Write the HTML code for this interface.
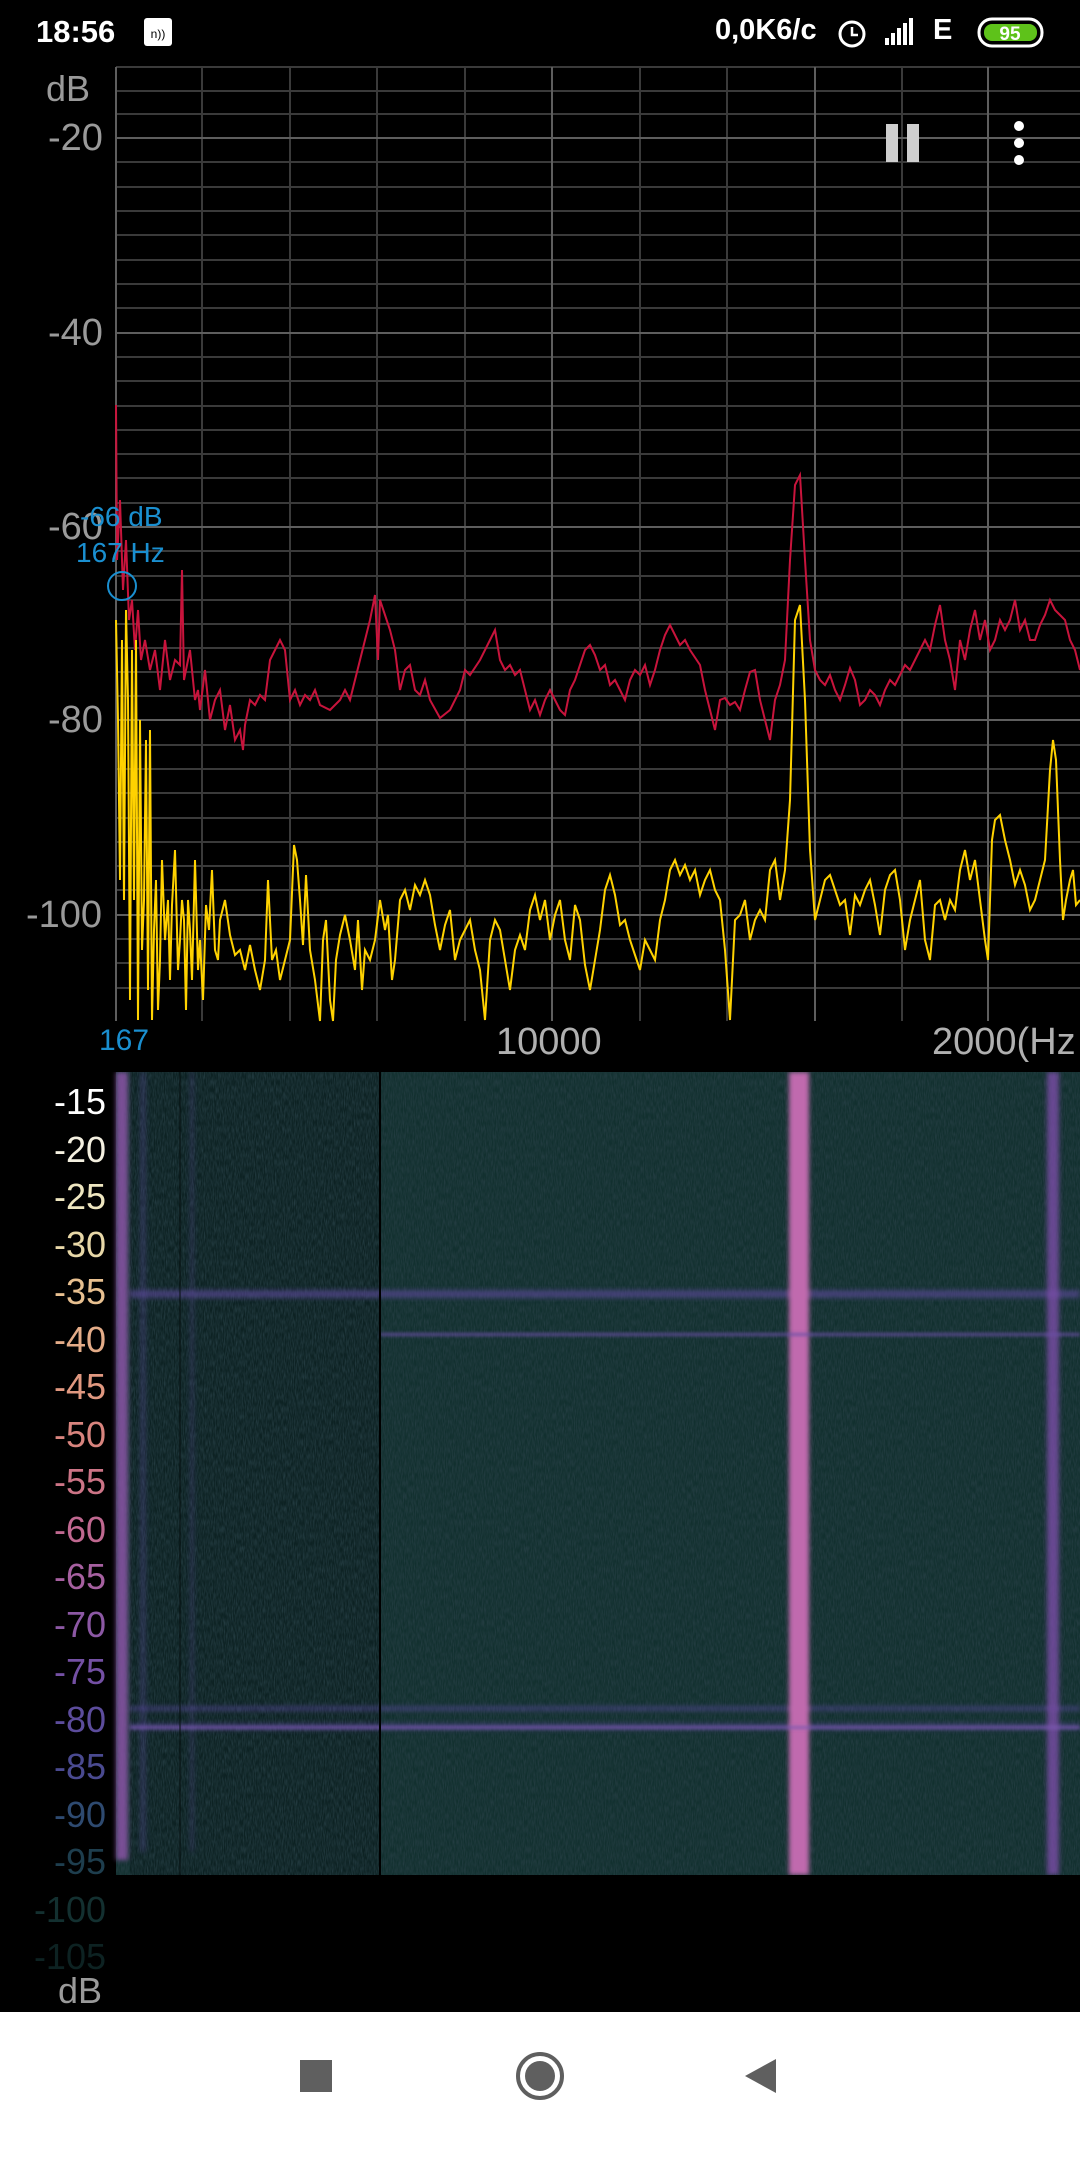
<!DOCTYPE html>
<html><head><meta charset="utf-8"><style>
html,body{margin:0;padding:0;background:#000;width:1080px;height:2160px;overflow:hidden;font-family:"Liberation Sans","DejaVu Sans",sans-serif}
.t{position:absolute;white-space:nowrap}
</style></head><body>
<svg width="1080" height="2160" style="position:absolute;left:0;top:0" xmlns="http://www.w3.org/2000/svg">
<defs>
<filter id="bl" x="-0.5" y="-0.5" width="2" height="2"><feGaussianBlur stdDeviation="2.5"/></filter>
<filter id="bl2" x="-0.5" y="-0.5" width="2" height="2"><feGaussianBlur stdDeviation="1.5"/></filter>
<filter id="noise" x="0" y="0" width="1" height="1">
<feTurbulence type="fractalNoise" baseFrequency="0.9 0.15" numOctaves="2" seed="3"/>
<feColorMatrix type="matrix" values="0 0 0 0 0.02  0 0 0 0 0.05  0 0 0 0 0.06  0 0 0 -1.6 1.1"/>
</filter>
</defs>
<rect width="1080" height="2160" fill="#000"/>
<g stroke="#3a3a3a" stroke-width="2">
<line x1="116" y1="67" x2="1080" y2="67"/><line x1="116" y1="91" x2="1080" y2="91"/><line x1="116" y1="114" x2="1080" y2="114"/>
<line x1="116" y1="162" x2="1080" y2="162"/><line x1="116" y1="187" x2="1080" y2="187"/><line x1="116" y1="211" x2="1080" y2="211"/><line x1="116" y1="235" x2="1080" y2="235"/><line x1="116" y1="260" x2="1080" y2="260"/><line x1="116" y1="284" x2="1080" y2="284"/><line x1="116" y1="308" x2="1080" y2="308"/>
<line x1="116" y1="357" x2="1080" y2="357"/><line x1="116" y1="381" x2="1080" y2="381"/><line x1="116" y1="406" x2="1080" y2="406"/><line x1="116" y1="430" x2="1080" y2="430"/><line x1="116" y1="454" x2="1080" y2="454"/><line x1="116" y1="478" x2="1080" y2="478"/><line x1="116" y1="503" x2="1080" y2="503"/>
<line x1="116" y1="551" x2="1080" y2="551"/><line x1="116" y1="576" x2="1080" y2="576"/><line x1="116" y1="600" x2="1080" y2="600"/><line x1="116" y1="624" x2="1080" y2="624"/><line x1="116" y1="648" x2="1080" y2="648"/><line x1="116" y1="672" x2="1080" y2="672"/><line x1="116" y1="696" x2="1080" y2="696"/>
<line x1="116" y1="745" x2="1080" y2="745"/><line x1="116" y1="769" x2="1080" y2="769"/><line x1="116" y1="793" x2="1080" y2="793"/><line x1="116" y1="818" x2="1080" y2="818"/><line x1="116" y1="842" x2="1080" y2="842"/><line x1="116" y1="866" x2="1080" y2="866"/><line x1="116" y1="890" x2="1080" y2="890"/>
<line x1="116" y1="939" x2="1080" y2="939"/><line x1="116" y1="963" x2="1080" y2="963"/><line x1="116" y1="988" x2="1080" y2="988"/>
<line x1="202" y1="67" x2="202" y2="1021"/><line x1="290" y1="67" x2="290" y2="1021"/><line x1="377" y1="67" x2="377" y2="1021"/><line x1="465" y1="67" x2="465" y2="1021"/><line x1="640" y1="67" x2="640" y2="1021"/><line x1="727" y1="67" x2="727" y2="1021"/><line x1="902" y1="67" x2="902" y2="1021"/>
</g>
<g stroke="#5e5e5e" stroke-width="2">
<line x1="116" y1="138" x2="1080" y2="138"/><line x1="116" y1="333" x2="1080" y2="333"/><line x1="116" y1="527" x2="1080" y2="527"/><line x1="116" y1="720" x2="1080" y2="720"/><line x1="116" y1="915" x2="1080" y2="915"/>
<line x1="116" y1="67" x2="116" y2="1021"/><line x1="552" y1="67" x2="552" y2="1021"/><line x1="815" y1="67" x2="815" y2="1021"/><line x1="988" y1="67" x2="988" y2="1021"/>
</g>
<polyline fill="none" stroke="#c8143c" stroke-width="2" points="116,405 117,560 120,500 123,590 126,540 129,620 132,600 135,650 138,610 141,660 145,640 150,670 155,650 160,690 165,640 170,680 175,660 180,665 182,570 184,680 190,650 195,700 198,690 200,710 205,670 210,720 215,700 220,690 225,730 230,705 235,740 240,730 243,750 245,725 250,700 255,705 260,695 265,700 270,660 275,650 280,640 285,650 290,700 295,690 300,705 305,695 310,700 315,690 320,705 330,710 340,700 345,690 350,700 360,660 365,640 370,620 375,595 378,660 380,600 385,615 390,630 395,650 400,690 405,670 410,665 415,690 420,695 425,680 430,700 440,718 450,710 460,690 465,670 470,675 480,660 490,640 495,630 500,660 505,670 510,665 515,675 520,670 525,690 530,710 535,700 540,715 545,700 550,690 555,700 560,710 565,715 570,690 575,680 580,665 585,650 590,645 595,655 600,670 605,665 610,685 615,680 620,690 625,700 630,680 635,670 640,675 645,665 650,685 655,670 660,650 665,635 670,625 675,635 680,645 685,640 690,650 700,665 705,690 710,710 715,730 720,700 725,698 730,705 735,702 740,710 745,690 750,672 755,670 760,700 765,720 770,740 775,700 780,685 785,660 790,560 795,485 800,475 805,560 810,640 815,670 820,680 825,685 830,675 835,690 840,700 845,685 850,668 855,680 860,705 865,700 870,690 875,695 880,705 885,690 890,680 895,685 900,675 905,665 910,670 915,660 920,650 925,640 930,650 935,625 940,605 945,640 950,660 955,690 960,640 965,660 970,630 975,610 980,640 985,620 990,650 995,640 1000,620 1005,630 1010,620 1015,600 1020,630 1025,620 1030,640 1035,640 1040,625 1045,615 1050,600 1055,610 1060,615 1065,620 1070,640 1075,650 1080,670"/>
<polyline fill="none" stroke="#ffd200" stroke-width="2" points="116,620 118,720 120,880 122,640 124,900 126,610 128,700 130,1000 132,650 134,900 136,640 138,1020 140,720 142,950 144,900 146,740 148,990 150,730 152,1020 154,930 156,880 158,1010 160,960 162,860 165,940 168,900 170,980 172,905 175,850 178,970 180,940 182,900 184,920 186,1010 188,900 190,930 192,980 195,860 198,970 200,940 203,1000 206,905 209,930 212,870 215,950 218,960 220,920 225,900 230,935 235,955 240,950 245,970 250,945 255,970 260,990 265,960 268,880 272,960 276,950 280,980 285,960 290,940 294,845 297,860 300,900 303,945 306,875 310,950 315,980 320,1021 323,940 326,920 330,1000 333,1021 336,960 340,935 345,915 350,940 355,970 358,920 362,990 365,950 370,960 375,940 380,900 385,930 388,915 392,980 395,960 400,900 405,890 410,910 415,885 420,895 425,880 430,895 435,925 440,950 445,925 450,910 455,960 460,940 465,930 470,920 475,950 480,970 485,1020 490,940 495,920 500,930 505,960 510,990 515,950 520,935 525,950 530,910 535,895 540,920 545,900 550,940 555,915 560,900 565,940 570,960 575,905 580,920 585,965 590,990 595,960 600,930 605,890 610,875 615,895 620,925 625,920 630,940 635,955 640,970 645,940 650,950 655,960 660,920 665,900 670,870 675,860 680,875 685,865 690,880 695,870 700,895 705,880 710,870 715,890 720,900 725,950 730,1020 735,920 740,915 745,900 750,940 755,920 760,910 765,920 770,870 775,860 780,900 785,870 790,800 795,620 800,605 805,700 810,850 815,920 820,900 825,880 830,875 835,890 840,905 845,900 850,935 855,895 860,905 865,890 870,880 875,905 880,935 885,890 890,875 895,870 900,900 905,950 910,920 915,900 920,880 925,940 930,960 935,905 940,900 945,920 950,900 955,910 960,870 965,850 970,880 975,860 980,900 985,940 988,960 992,840 995,820 1000,815 1005,840 1010,860 1015,885 1020,870 1025,885 1030,910 1035,900 1040,880 1045,860 1050,770 1053,740 1056,760 1060,860 1063,920 1066,900 1070,880 1073,870 1076,905 1080,900"/>
<circle cx="122" cy="586" r="14" fill="none" stroke="#1a8fd0" stroke-width="2"/>
<!-- spectrogram -->
<rect x="116" y="1072" width="964" height="803" fill="#12302f"/>
<rect x="130" y="1072" width="250" height="803" fill="#0d2223"/>
<rect x="116" y="1072" width="964" height="803" filter="url(#noise)"/>
<g filter="url(#bl)">
<rect x="116" y="1072" width="12" height="788" fill="#8a54a6" opacity="0.85"/>
<rect x="130" y="1290" width="950" height="8" fill="#5a4a98" opacity="0.65"/>
<rect x="130" y="1706" width="950" height="5" fill="#5a48a0" opacity="0.5"/>
<rect x="130" y="1723" width="950" height="7" fill="#5a48a0" opacity="0.45"/>
<rect x="789" y="1072" width="20" height="803" fill="#c06aae"/>
<rect x="1047" y="1072" width="12" height="803" fill="#7a4ea8" opacity="0.8"/>
<rect x="140" y="1072" width="6" height="780" fill="#5a4a98" opacity="0.35"/>
<rect x="190" y="1072" width="4" height="780" fill="#5a4a98" opacity="0.3"/>
</g>
<g filter="url(#bl2)">
<rect x="380" y="1333" width="700" height="3" fill="#6a50a8" opacity="0.8"/>
<rect x="130" y="1726" width="950" height="3" fill="#7a5ab0" opacity="0.8"/>
</g>
<line x1="380" y1="1072" x2="380" y2="1875" stroke="#000" stroke-width="2"/>
<line x1="180" y1="1072" x2="180" y2="1875" stroke="#050e0e" stroke-width="1"/>
<rect x="0" y="1875" width="1080" height="20" fill="#000"/>
<rect x="0" y="1060" width="1080" height="12" fill="#000"/>
<!-- nav bar -->
<rect x="0" y="2012" width="1080" height="148" fill="#fff"/>
<rect x="300" y="2060" width="32" height="32" fill="#5f5f5f"/>
<circle cx="540" cy="2076" r="22" fill="none" stroke="#5f5f5f" stroke-width="4"/>
<circle cx="540" cy="2076" r="15" fill="#5f5f5f"/>
<path d="M745 2076 L776 2059 L776 2093 Z" fill="#5f5f5f"/>
<rect x="886" y="124" width="12" height="38" fill="#cfcfcf"/>
<rect x="907" y="124" width="12" height="38" fill="#cfcfcf"/>
<circle cx="1019" cy="126" r="5" fill="#fff"/><circle cx="1019" cy="143" r="5" fill="#fff"/><circle cx="1019" cy="160" r="5" fill="#fff"/>
<rect x="144" y="18" width="28" height="28" rx="3" fill="#fff"/>
<text x="158" y="38" font-size="12" text-anchor="middle" fill="#000">n))</text>
<circle cx="852" cy="34" r="12" fill="none" stroke="#fff" stroke-width="3"/>
<path d="M852 27 V35 H858" stroke="#fff" stroke-width="2.5" fill="none"/>
<g fill="#fff"><rect x="885" y="38" width="4" height="7"/><rect x="891" y="33" width="4" height="12"/><rect x="897" y="28" width="4" height="17"/><rect x="903" y="23" width="4" height="22"/><rect x="909" y="18" width="4" height="27"/></g>
<rect x="979" y="19" width="63" height="27" rx="13" fill="none" stroke="#fff" stroke-width="3"/>
<rect x="984" y="24" width="53" height="17" rx="8" fill="#5ec21a"/>
<text x="1010" y="40" font-size="19" font-weight="bold" text-anchor="middle" fill="#fff" font-family="Liberation Sans">95</text>
</svg>
<div class="t" style="left:36px;top:14px;font-size:31px;font-weight:bold;color:#fff">18:56</div>
<div class="t" style="left:715px;top:14px;font-size:29px;font-weight:bold;color:#fff">0,0K6/c</div>
<div class="t" style="left:933px;top:14px;font-size:29px;font-weight:bold;color:#fff">E</div>
<div class="t" style="left:46px;top:68px;font-size:36px;color:#9a9a9a">dB</div>
<div class="t" style="left:48px;top:117px;font-size:38px;color:#9a9a9a">-20</div>
<div class="t" style="left:48px;top:312px;font-size:38px;color:#9a9a9a">-40</div>
<div class="t" style="left:48px;top:506px;font-size:38px;color:#9a9a9a">-60</div>
<div class="t" style="left:48px;top:699px;font-size:38px;color:#9a9a9a">-80</div>
<div class="t" style="left:26px;top:894px;font-size:38px;color:#9a9a9a">-100</div>
<div class="t" style="left:80px;top:501px;font-size:28px;color:#1a8fd0">-66 dB</div>
<div class="t" style="left:76px;top:537px;font-size:28px;color:#1a8fd0">167 Hz</div>
<div class="t" style="left:99px;top:1024px;font-size:30px;color:#1a8fd0">167</div>
<div class="t" style="left:496px;top:1021px;font-size:38px;color:#b0b0b0">10000</div>
<div class="t" style="left:932px;top:1021px;font-size:38px;color:#b0b0b0">2000(Hz</div>
<div style="position:absolute;right:974px;top:1078px;font-size:36px;line-height:47.5px;text-align:right">
<div style="color:#fff">-15</div><div style="color:#f4f0e0">-20</div><div style="color:#eee6c0">-25</div><div style="color:#e8d8a8">-30</div><div style="color:#e8c090">-35</div><div style="color:#e4ac88">-40</div><div style="color:#e09880">-45</div><div style="color:#d8847e">-50</div><div style="color:#cc7486">-55</div><div style="color:#c06890">-60</div><div style="color:#a660a0">-65</div><div style="color:#8c58a4">-70</div><div style="color:#7450a4">-75</div><div style="color:#5c4c9c">-80</div><div style="color:#4a4a90">-85</div><div style="color:#2e4a70">-90</div><div style="color:#1e3e4e">-95</div><div style="color:#133030">-100</div><div style="color:#0d2222">-105</div>
</div>
<div class="t" style="left:58px;top:1970px;font-size:36px;color:#9a9a9a">dB</div>
</body></html>
